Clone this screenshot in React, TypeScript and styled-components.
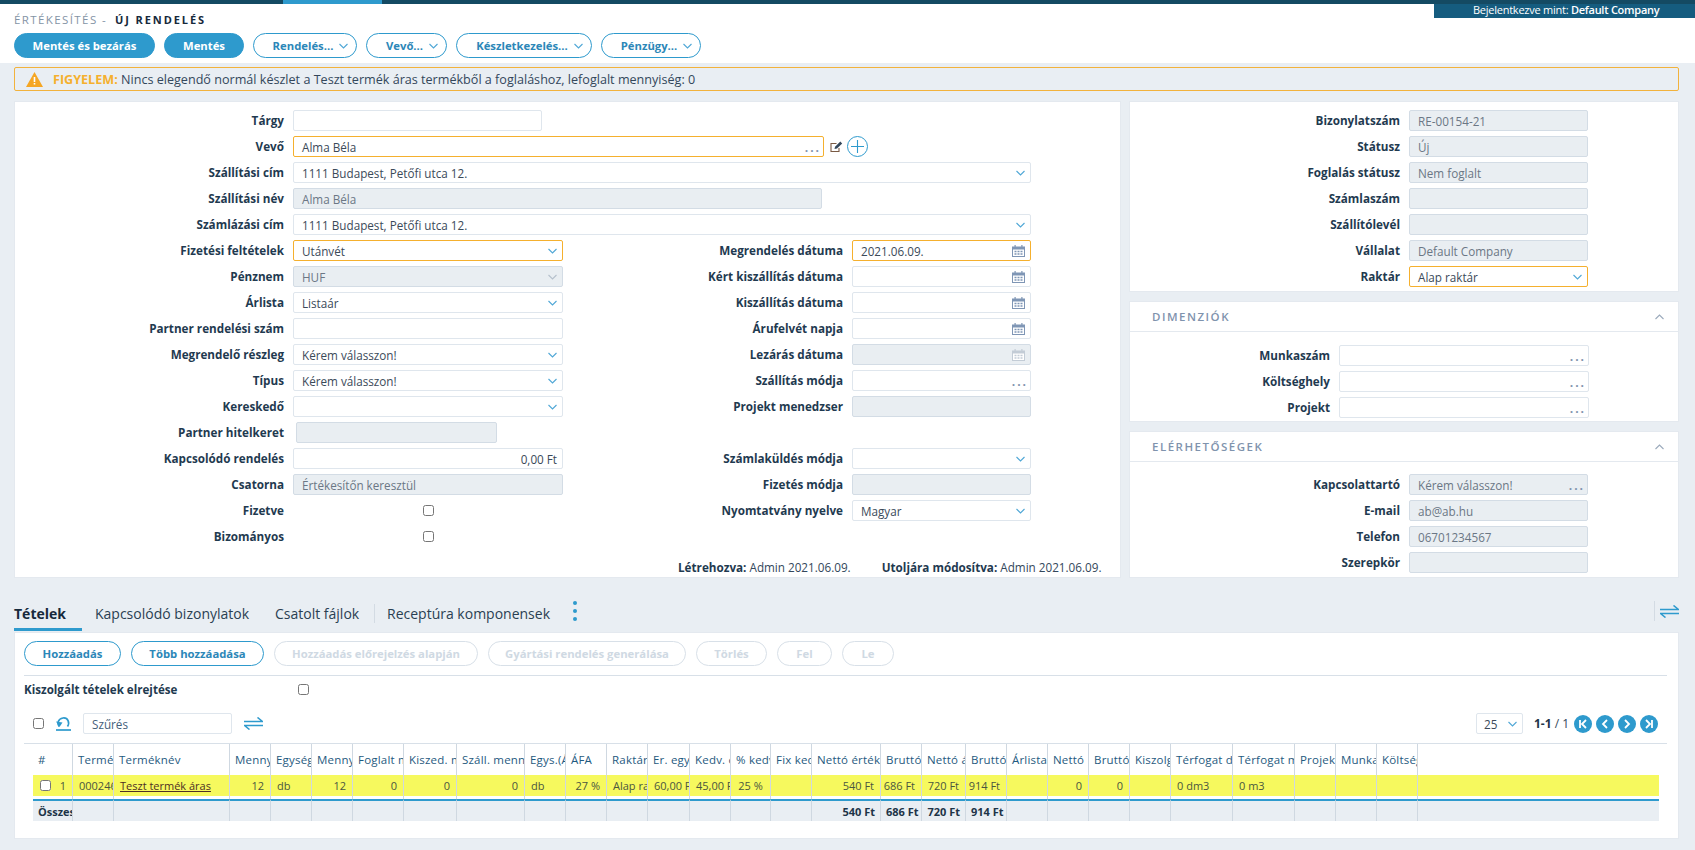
import React from 'react';
import styled, { createGlobalStyle } from 'styled-components';

const BLUE = '#2e9acd';
const FONT = '"Open Sans", "Noto Sans", sans-serif';

const GlobalStyle = createGlobalStyle`
  html, body { margin: 0; padding: 0; background: #e9eef3; }
  body { font-family: ${FONT}; font-size: 12px; color: #33475b; overflow: hidden; }
  * { box-sizing: border-box; }
  input[type='checkbox'] { width: 11px; height: 11px; margin: 0; }
`;

// --- data ---
const COLUMNS = [
  { w: 40, title: '#', value: '1', align: 'right' },
  { w: 41, title: 'Termékkód', value: '000246' },
  { w: 116, title: 'Terméknév', value: 'Teszt termék áras', link: true },
  { w: 41, title: 'Mennyiség', value: '12', align: 'right' },
  { w: 41, title: 'Egység', value: 'db' },
  { w: 41, title: 'Mennyiség', value: '12', align: 'right' },
  { w: 51, title: 'Foglalt menny.', value: '0', align: 'right' },
  { w: 53, title: 'Kiszed. menny.', value: '0', align: 'right' },
  { w: 68, title: 'Száll. mennyiség', value: '0', align: 'right' },
  { w: 41, title: 'Egys.(Áfa)', value: 'db' },
  { w: 41, title: 'ÁFA', value: '27 %', align: 'right' },
  { w: 41, title: 'Raktár', value: 'Alap raktár' },
  { w: 42, title: 'Er. egységár', value: '60,00 Ft' },
  { w: 41, title: 'Kedv. egységár', value: '45,00 Ft' },
  { w: 40, title: '% kedv.', value: '25 %', align: 'center' },
  { w: 41, title: 'Fix kedv.', value: '' },
  { w: 69, title: 'Nettó érték', value: '540 Ft', total: '540 Ft', align: 'right' },
  { w: 41, title: 'Bruttó érték', value: '686 Ft', total: '686 Ft', align: 'right' },
  { w: 44, title: 'Nettó ár', value: '720 Ft', total: '720 Ft', align: 'right' },
  { w: 41, title: 'Bruttó ár', value: '914 Ft', total: '914 Ft', align: 'right' },
  { w: 41, title: 'Árlista', value: '' },
  { w: 41, title: 'Nettó', value: '0', align: 'right' },
  { w: 41, title: 'Bruttó', value: '0', align: 'right' },
  { w: 41, title: 'Kiszolgált', value: '' },
  { w: 62, title: 'Térfogat dm3', value: '0 dm3' },
  { w: 62, title: 'Térfogat m3', value: '0 m3' },
  { w: 41, title: 'Projekt', value: '' },
  { w: 41, title: 'Munkaszám', value: '' },
  { w: 41, title: 'Költséghely', value: '' },
];
const GRID_COLS = COLUMNS.map((c) => `${c.w}px`).join(' ') + ' 1fr';

const TOOLBAR = [
  { label: 'Mentés és bezárás', w: 141, filled: true },
  { label: 'Mentés', w: 80, filled: true },
  { label: 'Rendelés...', w: 104 },
  { label: 'Vevő...', w: 81 },
  { label: 'Készletkezelés...', w: 136 },
  { label: 'Pénzügy...', w: 100 },
];

const ACTIONS = [
  { label: 'Hozzáadás', w: 97 },
  { label: 'Több hozzáadása', w: 133 },
  { label: 'Hozzáadás előrejelzés alapján', w: 204, off: true },
  { label: 'Gyártási rendelés generálása', w: 198, off: true },
  { label: 'Törlés', w: 71, off: true },
  { label: 'Fel', w: 55, off: true },
  { label: 'Le', w: 52, off: true },
];

// --- styled components ---
const Page = styled.div`
  width: 1695px;
  height: 850px;
  position: relative;
  overflow: hidden;
`;

const TopBar = styled.div`
  height: 4px;
  background: #144a63;
  display: flex;
`;

const TopBarActive = styled.div`
  width: 99px;
  margin-left: 283px;
  background: ${BLUE};
`;

const LoginBadge = styled.div`
  position: absolute;
  top: 4px;
  right: 0;
  width: 261px;
  height: 14px;
  background: #155c7f;
  color: #fff;
  font-size: 11px;
  letter-spacing: -0.25px;
  line-height: 12px;
  padding-left: 39px;
  b { font-weight: 600; }
`;

const Header = styled.header`
  height: 59px;
  background: #fff;
  padding: 8px 14px 0;
`;

const Breadcrumb = styled.div`
  height: 21px;
  line-height: 15px;
  font-size: 11.5px;
  letter-spacing: 1.4px;
  color: #8494a6;
  text-transform: uppercase;
  display: flex;
  gap: 8px;
  b { color: #16293b; font-weight: 700; letter-spacing: 1.9px; font-size: 11px; }
`;

const Toolbar = styled.div`
  display: flex;
  gap: 9px;
`;

const Pill = styled.button<{ $w: number; $filled?: boolean; $off?: boolean; $menu?: boolean }>`
  width: ${({ $w }) => $w}px;
  height: 25px;
  border-radius: 13px;
  padding: 0 0 0 ${({ $menu }) => ($menu ? 11 : 0)}px;
  font-family: ${FONT};
  font-size: 11.3px;
  font-weight: 700;
  display: flex;
  align-items: center;
  justify-content: center;
  gap: 6px;
  white-space: nowrap;
  border: 1px solid ${({ $off }) => ($off ? '#d8e0e8' : BLUE)};
  background: ${({ $filled }) => ($filled ? BLUE : '#fff')};
  color: ${({ $filled, $off }) => ($filled ? '#fff' : $off ? '#cfd9e3' : '#2c87b8')};
`;

const Warning = styled.div`
  margin: 4px 16px 0 14px;
  height: 24px;
  border: 1px solid #f2b23c;
  border-radius: 2px;
  display: flex;
  align-items: center;
  gap: 10px;
  padding-left: 11px;
  font-size: 12.6px;
  color: #33475b;
  b { color: #f5b02e; font-weight: 700; }
`;

const Columns = styled.div`
  margin: 10px 16px 0 14px;
  display: grid;
  grid-template-columns: 1107px 550px;
  column-gap: 8px;
  height: 477px;
`;

const Panel = styled.section`
  background: #fff;
  border: 1px solid #e4e9ef;
`;

const MainPanel = styled(Panel)`
  padding-top: 8px;
  position: relative;
`;

const Side = styled.div`
  display: flex;
  flex-direction: column;
  gap: 9px;
`;

const SidePanel = styled(Panel)<{ $h: number }>`
  height: ${({ $h }) => $h}px;
`;

const SideHead = styled.div`
  height: 30px;
  border-bottom: 1px solid #e4e9ef;
  padding: 0 14px 0 22px;
  display: flex;
  align-items: center;
  justify-content: space-between;
  color: #7f93ad;
  font-size: 11.5px;
  font-weight: 600;
  letter-spacing: 1.5px;
`;

const FieldGrid = styled.div<{ $cols: string; $top?: number }>`
  display: grid;
  grid-template-columns: ${({ $cols }) => $cols};
  column-gap: 9px;
  row-gap: 5px;
  grid-auto-rows: 21px;
  padding-top: ${({ $top }) => $top ?? 0}px;
`;

const Label = styled.label<{ $col?: number }>`
  ${({ $col }) => ($col ? `grid-column: ${$col};` : '')}
  text-align: right;
  font-weight: 700;
  font-size: 11.7px;
  line-height: 21px;
  color: #1f3a50;
  white-space: nowrap;
`;

type Tone = 'normal' | 'focus' | 'off';

const Box = styled.div<{ $tone?: Tone; $w?: number; $right?: boolean; $shift?: number }>`
  width: ${({ $w }) => ($w ? `${$w}px` : '100%')};
  height: 21px;
  ${({ $shift }) => ($shift ? `margin-left: ${$shift}px;` : '')}
  border-radius: 2px;
  border: 1px solid
    ${({ $tone }) => ($tone === 'focus' ? '#f5b02e' : $tone === 'off' ? '#d3dce5' : '#dfe6ed')};
  background: ${({ $tone }) => ($tone === 'off' ? '#e9eef2' : '#fff')};
  color: ${({ $tone }) => ($tone === 'off' ? '#6b7785' : '#3b4a59')};
  display: flex;
  align-items: center;
  justify-content: space-between;
  padding: 0 5px 0 8px;
  font-size: 11.7px;
  white-space: nowrap;
  position: relative;
  span { flex: 1; text-align: ${({ $right }) => ($right ? 'right' : 'left')}; }
`;

const Dots = styled.i`
  position: absolute;
  right: 2px;
  bottom: 2px;
  font-style: normal;
  font-weight: 700;
  font-size: 12px;
  line-height: 12px;
  letter-spacing: 2px;
  color: #7f93ad;
`;

const WideSpan = styled.div`
  grid-column: 2 / 5;
  display: flex;
  align-items: center;
`;

const CheckCell = styled.div`
  display: flex;
  align-items: center;
  padding-left: 130px;
`;

const Audit = styled.div`
  position: absolute;
  top: 457px;
  left: 663px;
  display: flex;
  gap: 31px;
  font-size: 11.7px;
  white-space: nowrap;
  b { font-weight: 700; color: #1f3a50; }
`;

const TabsBar = styled.nav`
  margin: 0 16px 0 14px;
  height: 54px;
  display: flex;
  align-items: flex-end;
`;

const Tab = styled.div<{ $active?: boolean; $w: number; $gap?: number; $pad?: number }>`
  width: ${({ $w }) => $w}px;
  height: 31px;
  margin: 0 ${({ $gap }) => $gap ?? 0}px 1px 0;
  padding-left: ${({ $pad }) => $pad ?? 0}px;
  font-size: 14px;
  line-height: 28px;
  white-space: nowrap;
  font-weight: ${({ $active }) => ($active ? 700 : 400)};
  color: ${({ $active }) => ($active ? '#16293b' : '#2a3f52')};
  border-bottom: 3px solid ${({ $active }) => ($active ? BLUE : 'transparent')};
`;

const TabRule = styled.div<{ $h: number }>`
  width: 1px;
  height: ${({ $h }) => $h}px;
  background: #d3dbe3;
`;

const TabDivider = styled(TabRule)`
  margin-bottom: 9px;
`;

const TabMore = styled.div`
  margin: 0 0 11px 9px;
  display: flex;
  flex-direction: column;
  gap: 4px;
  i { width: 4px; height: 4px; border-radius: 50%; background: ${BLUE}; }
`;

const TabEnd = styled.div`
  margin-left: auto;
  display: flex;
  align-items: center;
  gap: 5px;
  padding-bottom: 11px;
`;

const Card = styled.section`
  height: 207px;
  margin: 0 16px 0 14px;
  background: #fff;
  border: 1px solid #e4e9ef;
  padding: 8px 11px 0 9px;
`;

const ActionRow = styled.div`
  display: flex;
  gap: 10px;
  padding-bottom: 9px;
  border-bottom: 1px solid #d8e0e8;
`;

const HideRow = styled.div`
  height: 27px;
  display: flex;
  align-items: center;
  font-weight: 700;
  font-size: 11.6px;
  color: #1f3a50;
  span { width: 274px; white-space: nowrap; }
`;

const FilterRow = styled.div`
  height: 40px;
  padding: 10px 9px 0 9px;
  display: flex;
  justify-content: space-between;
  align-items: flex-start;
`;

const FilterLeft = styled.div`
  display: flex;
  align-items: center;
  gap: 12px;
  height: 21px;
`;

const FilterBox = styled(Box)`
  color: #45607a;
`;

const Pager = styled.div`
  display: flex;
  align-items: center;
  height: 21px;
  font-size: 12px;
`;

const PageSize = styled(Box)`
  padding: 0 5px 0 7px;
  margin-right: 11px;
`;

const PagerText = styled.div`
  width: 36px;
  white-space: nowrap;
  b { color: #1d3448; }
`;

const PagerBtn = styled.button`
  width: 18px;
  height: 18px;
  border-radius: 50%;
  border: 0;
  padding: 0;
  margin-left: 4px;
  background: ${BLUE};
  display: flex;
  align-items: center;
  justify-content: center;
`;

const TableWrap = styled.div`
  border-top: 1px solid #d8e0e8;
  padding: 0 8px 0 9px;
`;

const GridRow = styled.div`
  display: grid;
  grid-template-columns: ${GRID_COLS};
`;

const Cell = styled.div`
  border-right: 1px solid #cfd8e1;
  overflow: hidden;
  white-space: nowrap;
  &:last-child { border-right: 0; }
`;

const HeadCell = styled(Cell)`
  height: 31px;
  padding: 0 5px;
  line-height: 31px;
  font-size: 11.5px;
  letter-spacing: 0.2px;
  color: #1f5a80;
`;

const DataCell = styled(Cell)`
  height: 24px;
  padding-bottom: 3px;
`;

const DataInner = styled.div<{ $align?: string }>`
  height: 21px;
  padding: 0 6px;
  background: #f6f95e;
  display: flex;
  align-items: center;
  font-size: 11px;
  color: #4a5640;
  justify-content: ${({ $align }) =>
    $align === 'right' ? 'flex-end' : $align === 'center' ? 'center' : 'flex-start'};
  a { color: #4e2f24; text-decoration: underline; }
`;

const RowCheck = styled.input`
  && { margin: 0 auto 0 1px; }
`;

const TotalCell = styled(Cell)<{ $left?: boolean }>`
  height: 22px;
  padding: 0 5px;
  line-height: 21px;
  font-weight: 700;
  font-size: 11px;
  color: #1d3448;
  background: #e9eef3;
  border-top: 2px solid ${BLUE};
  text-align: ${({ $left }) => ($left ? 'left' : 'right')};
`;

const IconSvg = styled.svg<{ $ml?: number }>`
  flex-shrink: 0;
  margin-left: ${({ $ml }) => $ml ?? 0}px;
`;

// --- icons ---
const Chevron = ({ up, color = '#4fa7d6' }: { up?: boolean; color?: string }) => (
  <IconSvg width="9" height="6" viewBox="0 0 9 6" fill="none">
    <path d={up ? 'M0.5 5L4.5 1l4 4' : 'M0.5 1l4 4 4-4'} stroke={color} strokeWidth="1.1" />
  </IconSvg>
);

const CalendarIcon = ({ faded }: { faded?: boolean }) => {
  const c = faded ? '#c3ccd6' : '#7f96b5';
  return (
    <IconSvg width="13" height="12" viewBox="0 0 13 12">
      <path fill={c} d="M0 1.5h2.5V0h1.2v1.5h5.6V0h1.2v1.5H13V12H0z" />
      <path fill="#fff" d="M1 4.5h11V11H1z" />
      <path fill={c} d="M2.5 5.7h2v1.6h-2zM5.5 5.7h2v1.6h-2zM8.5 5.7h2v1.6h-2zM2.5 8.2h2v1.6h-2zM5.5 8.2h2v1.6h-2zM8.5 8.2h2v1.6h-2z" />
    </IconSvg>
  );
};

const WarnIcon = () => (
  <IconSvg width="17" height="15" viewBox="0 0 17 15">
    <path fill="#f5a623" d="M8.5 0L17 15H0z" />
    <path fill="#fff" d="M7.7 5h1.6v5H7.7zM7.7 11h1.6v1.6H7.7z" />
  </IconSvg>
);

const EditIcon = () => (
  <IconSvg width="13" height="12" viewBox="0 0 13 12" fill="none" $ml={6}>
    <path d="M9 7v3.5H1V2.5h5.5" stroke="#7a5a44" strokeWidth="1.1" />
    <path d="M4.5 8l.6-2.3L10.3.6l1.9 1.8L7 7.4z" fill="#33475b" />
  </IconSvg>
);

const PlusIcon = () => (
  <IconSvg width="21" height="21" viewBox="0 0 21 21" fill="none" $ml={4}>
    <circle cx="10.5" cy="10.5" r="10" stroke={BLUE} strokeWidth="1" />
    <path d="M10.5 4v13M4 10.5h13" stroke={BLUE} strokeWidth="1.1" />
  </IconSvg>
);

const SwapIcon = () => (
  <IconSvg width="19" height="13" viewBox="0 0 19 13" fill="none">
    <path d="M0 4.5h18.5L13.5 0.5" stroke={BLUE} strokeWidth="1.6" />
    <path d="M19 8.5H0.5l5 4" stroke={BLUE} strokeWidth="1.6" />
  </IconSvg>
);

const ResetIcon = () => (
  <IconSvg width="15" height="15" viewBox="0 0 15 15" fill="none">
    <path d="M3 10.5C1 8 1.5 3 7 2c5-.6 7 4.5 4.5 8.5" stroke={BLUE} strokeWidth="1.7" />
    <path d="M0 5.5l3.5 5.5 3-4.5z" fill={BLUE} />
    <path d="M0 14h15" stroke={BLUE} strokeWidth="1.7" />
  </IconSvg>
);

const PagerIcon = ({ d }: { d: string }) => (
  <IconSvg width="12" height="12" viewBox="0 0 12 12" fill="none">
    <path d={d} stroke="#fff" strokeWidth="1.8" />
  </IconSvg>
);

// --- small parts ---
type FieldProps = {
  value?: string;
  tone?: Tone;
  kind?: 'select' | 'date' | 'dots';
  w?: number;
  right?: boolean;
  shift?: number;
};

const Field = ({ value, tone = 'normal', kind, w, right, shift }: FieldProps) => (
  <Box $tone={tone} $w={w} $right={right} $shift={shift}>
    <span>{value}</span>
    {kind === 'select' && <Chevron color={tone === 'off' ? '#b5c0cc' : '#4fa7d6'} />}
    {kind === 'date' && <CalendarIcon faded={tone === 'off'} />}
    {kind === 'dots' && <Dots>...</Dots>}
  </Box>
);

const Check = () => <input type="checkbox" readOnly />;

const App: React.FC = () => (
  <Page>
    <GlobalStyle />
    <TopBar>
      <TopBarActive />
    </TopBar>
    <LoginBadge>
      Bejelentkezve mint: <b>Default Company</b>
    </LoginBadge>

    <Header>
      <Breadcrumb>
        Értékesítés - <b>Új rendelés</b>
      </Breadcrumb>
      <Toolbar>
        {TOOLBAR.map((b) => (
          <Pill key={b.label} $w={b.w} $filled={b.filled} $menu={!b.filled}>
            {b.label}
            {!b.filled && <Chevron />}
          </Pill>
        ))}
      </Toolbar>
    </Header>

    <Warning>
      <WarnIcon />
      <div>
        <b>FIGYELEM:</b> Nincs elegendő normál készlet a Teszt termék áras termékből a foglaláshoz, lefoglalt mennyiség: 0
      </div>
    </Warning>

    <Columns>
      <MainPanel>
        <FieldGrid $cols="269px 270px 271px 179px">
          <Label>Tárgy</Label>
          <Field w={249} />
          <Label $col={1}>Vevő</Label>
          <WideSpan>
            <Field value="Alma Béla" tone="focus" kind="dots" w={531} />
            <EditIcon />
            <PlusIcon />
          </WideSpan>
          <Label>Szállítási cím</Label>
          <WideSpan>
            <Field value="1111 Budapest, Petőfi utca 12." kind="select" />
          </WideSpan>
          <Label>Szállítási név</Label>
          <WideSpan>
            <Field value="Alma Béla" tone="off" w={529} />
          </WideSpan>
          <Label>Számlázási cím</Label>
          <WideSpan>
            <Field value="1111 Budapest, Petőfi utca 12." kind="select" />
          </WideSpan>

          <Label>Fizetési feltételek</Label>
          <Field value="Utánvét" tone="focus" kind="select" />
          <Label>Megrendelés dátuma</Label>
          <Field value="2021.06.09." tone="focus" kind="date" />

          <Label>Pénznem</Label>
          <Field value="HUF" tone="off" kind="select" />
          <Label>Kért kiszállítás dátuma</Label>
          <Field kind="date" />

          <Label>Árlista</Label>
          <Field value="Listaár" kind="select" />
          <Label>Kiszállítás dátuma</Label>
          <Field kind="date" />

          <Label>Partner rendelési szám</Label>
          <Field />
          <Label>Árufelvét napja</Label>
          <Field kind="date" />

          <Label>Megrendelő részleg</Label>
          <Field value="Kérem válasszon!" kind="select" />
          <Label>Lezárás dátuma</Label>
          <Field tone="off" kind="date" />

          <Label>Típus</Label>
          <Field value="Kérem válasszon!" kind="select" />
          <Label>Szállítás módja</Label>
          <Field kind="dots" />

          <Label>Kereskedő</Label>
          <Field kind="select" />
          <Label>Projekt menedzser</Label>
          <Field tone="off" />

          <Label>Partner hitelkeret</Label>
          <Field tone="off" w={201} shift={3} />
          <Label $col={1}>Kapcsolódó rendelés</Label>
          <Field value="0,00 Ft" right />
          <Label>Számlaküldés módja</Label>
          <Field kind="select" />

          <Label>Csatorna</Label>
          <Field value="Értékesítőn keresztül" tone="off" />
          <Label>Fizetés módja</Label>
          <Field tone="off" />

          <Label>Fizetve</Label>
          <CheckCell>
            <Check />
          </CheckCell>
          <Label>Nyomtatvány nyelve</Label>
          <Field value="Magyar" kind="select" />

          <Label>Bizományos</Label>
          <CheckCell>
            <Check />
          </CheckCell>
        </FieldGrid>
        <Audit>
          <div>
            <b>Létrehozva:</b> Admin 2021.06.09.
          </div>
          <div>
            <b>Utoljára módosítva:</b> Admin 2021.06.09.
          </div>
        </Audit>
      </MainPanel>

      <Side>
        <SidePanel $h={191}>
          <FieldGrid $cols="270px 179px" $top={8}>
            <Label>Bizonylatszám</Label>
            <Field value="RE-00154-21" tone="off" />
            <Label>Státusz</Label>
            <Field value="Új" tone="off" />
            <Label>Foglalás státusz</Label>
            <Field value="Nem foglalt" tone="off" />
            <Label>Számlaszám</Label>
            <Field tone="off" />
            <Label>Szállítólevél</Label>
            <Field tone="off" />
            <Label>Vállalat</Label>
            <Field value="Default Company" tone="off" />
            <Label>Raktár</Label>
            <Field value="Alap raktár" tone="focus" kind="select" />
          </FieldGrid>
        </SidePanel>

        <SidePanel $h={121}>
          <SideHead>
            DIMENZIÓK
            <Chevron up color="#9aa9bb" />
          </SideHead>
          <FieldGrid $cols="200px 250px" $top={13}>
            <Label>Munkaszám</Label>
            <Field kind="dots" />
            <Label>Költséghely</Label>
            <Field kind="dots" />
            <Label>Projekt</Label>
            <Field kind="dots" />
          </FieldGrid>
        </SidePanel>

        <SidePanel $h={147}>
          <SideHead>
            ELÉRHETŐSÉGEK
            <Chevron up color="#9aa9bb" />
          </SideHead>
          <FieldGrid $cols="270px 179px" $top={12}>
            <Label>Kapcsolattartó</Label>
            <Field value="Kérem válasszon!" tone="off" kind="dots" />
            <Label>E-mail</Label>
            <Field value="ab@ab.hu" tone="off" />
            <Label>Telefon</Label>
            <Field value="06701234567" tone="off" />
            <Label>Szerepkör</Label>
            <Field tone="off" />
          </FieldGrid>
        </SidePanel>
      </Side>
    </Columns>

    <TabsBar>
      <Tab $active $w={68} $gap={13}>Tételek</Tab>
      <Tab $w={180}>Kapcsolódó bizonylatok</Tab>
      <Tab $w={99}>Csatolt fájlok</Tab>
      <TabDivider $h={19} />
      <Tab $w={189} $pad={12}>Receptúra komponensek</Tab>
      <TabMore>
        <i />
        <i />
        <i />
      </TabMore>
      <TabEnd>
        <TabRule $h={20} />
        <SwapIcon />
      </TabEnd>
    </TabsBar>

    <Card>
      <ActionRow>
        {ACTIONS.map((a) => (
          <Pill key={a.label} $w={a.w} $off={a.off}>
            {a.label}
          </Pill>
        ))}
      </ActionRow>
      <HideRow>
        <span>Kiszolgált tételek elrejtése</span>
        <Check />
      </HideRow>
      <FilterRow>
        <FilterLeft>
          <Check />
          <ResetIcon />
          <FilterBox $w={149}>
            <span>Szűrés</span>
          </FilterBox>
          <SwapIcon />
        </FilterLeft>
        <Pager>
          <PageSize $w={47}>
            <span>25</span>
            <Chevron />
          </PageSize>
          <PagerText>
            <b>1-1</b> / 1
          </PagerText>
          <PagerBtn><PagerIcon d="M3 2v8M9 2L5 6l4 4" /></PagerBtn>
          <PagerBtn><PagerIcon d="M8 2L4 6l4 4" /></PagerBtn>
          <PagerBtn><PagerIcon d="M4 2l4 4-4 4" /></PagerBtn>
          <PagerBtn><PagerIcon d="M3 2l4 4-4 4M9 2v8" /></PagerBtn>
        </Pager>
      </FilterRow>
      <TableWrap>
        <GridRow>
          {COLUMNS.map((c, i) => (
            <HeadCell key={i}>{c.title}</HeadCell>
          ))}
          <HeadCell />
        </GridRow>
        <GridRow>
          {COLUMNS.map((c, i) => (
            <DataCell key={i}>
              <DataInner $align={c.align}>
                {i === 0 && <RowCheck type="checkbox" readOnly />}
                {c.link ? <a>{c.value}</a> : c.value}
              </DataInner>
            </DataCell>
          ))}
          <DataCell>
            <DataInner />
          </DataCell>
        </GridRow>
        <GridRow>
          {COLUMNS.map((c, i) => (
            <TotalCell key={i} $left={i === 0}>
              {i === 0 ? 'Összesen' : c.total}
            </TotalCell>
          ))}
          <TotalCell />
        </GridRow>
      </TableWrap>
    </Card>
  </Page>
);

export default App;
